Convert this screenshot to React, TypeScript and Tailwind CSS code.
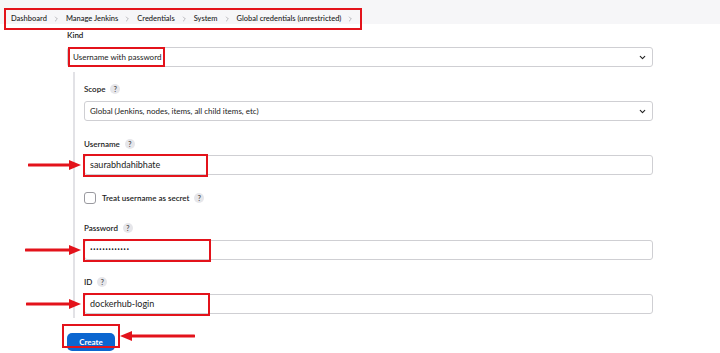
import type { ReactNode } from "react";

const crumbs = [
    "Dashboard",
    "Manage Jenkins",
    "Credentials",
    "System",
    "Global credentials (unrestricted)",
];

const font = { fontFamily: 'Lato, "Open Sans", sans-serif' };

const HelpIcon = () => (
    <span className="ml-[5px] inline-flex h-[10px] w-[10px] items-center justify-center rounded-full bg-[#e6e6ea] text-[7px] font-bold leading-none text-[#555]">
        ?
    </span>
);

const Chevron = () => (
    <svg width="9" height="9" viewBox="0 0 24 24" fill="none" stroke="#222" strokeWidth="3" strokeLinecap="round" strokeLinejoin="round" aria-hidden>
        <path d="m6 9 6 6 6-6" />
    </svg>
);

const CrumbChevron = () => (
    <svg width="7" height="8" viewBox="0 0 21 24" fill="none" stroke="#9a9aa0" strokeWidth="2" strokeLinecap="round" strokeLinejoin="round" aria-hidden>
        <path d="m7 18 6-6-6-6" />
    </svg>
);

const ArrowRight = ({ width }: { width: number }) => (
    <svg width={width} height="12" viewBox={`0 0 ${width} 12`} aria-hidden>
        <line x1="1" y1="6" x2={width - 10} y2="6" stroke="#e3131b" strokeWidth="3" strokeLinecap="round" />
        <polygon points={`${width - 12},1 ${width},6 ${width - 12},11`} fill="#e3131b" />
    </svg>
);

const ArrowLeft = ({ width }: { width: number }) => (
    <svg width={width} height="12" viewBox={`0 0 ${width} 12`} aria-hidden>
        <line x1="10" y1="6" x2={width - 1} y2="6" stroke="#e3131b" strokeWidth="3" strokeLinecap="round" />
        <polygon points="12,1 0,6 12,11" fill="#e3131b" />
    </svg>
);

const Label = ({ children, help = true }: { children: ReactNode; help?: boolean }) => (
    <div className="flex h-[12px] items-center text-[8px] font-semibold leading-[12px] text-[#222]">
        {children}
        {help && <HelpIcon />}
    </div>
);

const Select = ({ value, children }: { value: string; children?: ReactNode }) => (
    <div className="relative flex h-[20px] items-center justify-between rounded-[3px] border border-[#cfcfd3] pl-[5px] pr-[5px] text-[8px] text-[#222]">
        <span>{value}</span>
        <Chevron />
        {children}
    </div>
);

const TextField = ({
    value,
    boxWidth,
    arrow,
    password,
}: {
    value: string;
    boxWidth: number;
    arrow: number;
    password?: boolean;
}) => (
    <div className="relative flex h-[20px] w-full items-center rounded-[3px] border border-[#cfcfd3] bg-white pl-[5px]">
        {password ? (
            <span className="text-[7px] tracking-[0.4px] text-[#222]" style={{ fontFamily: '"Open Sans", sans-serif' }}>
                {value}
            </span>
        ) : (
            <span className="text-[9px] text-[#222]">{value}</span>
        )}
        <div
            className="absolute left-[-2px] top-[-2px] h-[23px] border-2 border-[#e3131b]"
            style={{ width: boxWidth }}
        />
        <div className="absolute top-[3px]" style={{ left: -arrow - 4 }}>
            <ArrowRight width={arrow} />
        </div>
    </div>
);

export default function App() {
    return (
        <div className="h-[353px] w-[720px] overflow-hidden bg-white" style={font}>
            <div className="h-[24px] bg-[#f6f6f8] pl-[4px] pt-[3px]">
                <div className="inline-flex h-[22px] items-center gap-[6px] whitespace-nowrap border-2 border-[#e3131b] pl-[5px] pr-[6px] text-[7.5px] font-medium text-[#222]">
                    {crumbs.map((c) => (
                        <span key={c} className="flex items-center gap-[6px]">
                            {c}
                            <CrumbChevron />
                        </span>
                    ))}
                </div>
            </div>

            <div className="ml-[67px] w-[586px] pt-[5px]">
                <Label help={false}>Kind</Label>
                <div className="mt-[6px]">
                    <Select value="Username with password">
                        <div className="absolute left-[0px] top-[-1px] h-[20px] w-[97px] border-2 border-[#e3131b]" />
                    </Select>
                </div>

                <div className="ml-[6px] mt-[5px] border-l-2 border-[#e2e2e6] pb-[4px] pl-[9px] pt-[11px]">
                    <Label>Scope</Label>
                    <div className="mt-[6px]">
                        <Select value="Global (Jenkins, nodes, items, all child items, etc)" />
                    </div>

                    <div className="mt-[17px]">
                        <Label>Username</Label>
                    </div>
                    <div className="mt-[5px]">
                        <TextField value="saurabhdahibhate" boxWidth={125} arrow={53} />
                    </div>

                    <div className="mt-[17px] flex h-[12px] items-center">
                        <span className="h-[12px] w-[12px] rounded-[3px] border border-[#9a9aa0] bg-white" />
                        <span className="ml-[6px] text-[8px] font-semibold text-[#222]">Treat username as secret</span>
                        <HelpIcon />
                    </div>

                    <div className="mt-[18px]">
                        <Label>Password</Label>
                    </div>
                    <div className="mt-[6px]">
                        <TextField value="•••••••••••••" boxWidth={128} arrow={56} password />
                    </div>

                    <div className="mt-[16px]">
                        <Label>ID</Label>
                    </div>
                    <div className="mt-[6px]">
                        <TextField value="dockerhub-login" boxWidth={127} arrow={55} />
                    </div>
                </div>

                <div className="relative mt-[9px] h-[18px] w-[48px]">
                    <button
                        type="button"
                        className="h-[18px] w-[48px] rounded-[5px] bg-[#0b66d0] text-[8px] font-bold text-white"
                    >
                        Create
                    </button>
                    <div className="absolute left-[-5px] top-[-3px] h-[24px] w-[58px] border-2 border-[#e3131b]" />
                    <div className="absolute left-[53px] top-[3px]">
                        <ArrowLeft width={75} />
                    </div>
                </div>
            </div>
        </div>
    );
}
